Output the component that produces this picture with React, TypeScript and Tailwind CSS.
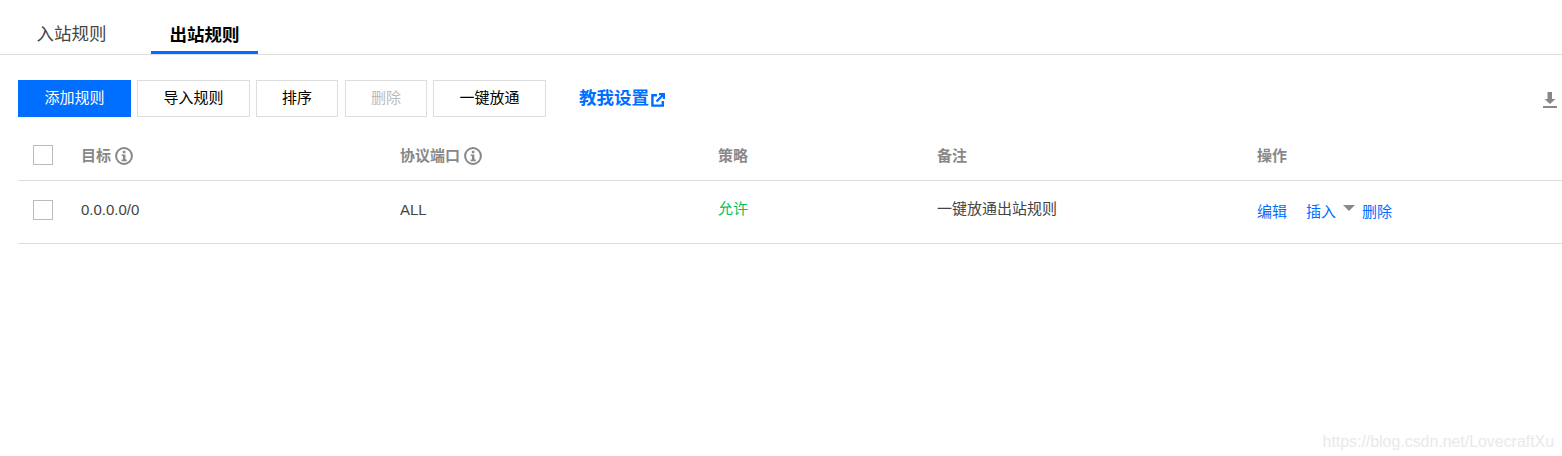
import React from 'react';

const font = { fontFamily: '"Liberation Sans", "Noto Sans CJK SC", sans-serif' };

function InfoIcon() {
    return (
        <svg width="18" height="18" viewBox="0 0 18 18" className="ml-[4px] shrink-0" fill="none">
            <circle cx="9" cy="9" r="7.9" stroke="#888888" strokeWidth="2" />
            <rect x="7.800" y="3.800" width="2.600" height="2.400" fill="#888888" />
            <path d="M6.600 7.400h3.800v5.200h1.400v1.600H6.600v-1.600h1.400V9H6.600z" fill="#888888" />
        </svg>
    );
}

function Checkbox() {
    return <div className="w-5 h-5 border border-[#bbbbbb] bg-white" />;
}

function Btn({ label, w, primary, disabled }: { label: string; w: string; primary?: boolean; disabled?: boolean }) {
    return (
        <button
            className={`${w} h-[37px] text-[15px] flex items-center justify-center ${
                primary
                    ? 'bg-[#006eff] text-white'
                    : disabled
                      ? 'border border-[#dddddd] text-[#bbbbbb] bg-white'
                      : 'border border-[#dddddd] text-black bg-white'
            }`}
        >
            {label}
        </button>
    );
}

export default function App() {
    return (
        <div className="relative w-[1562px] h-[456px] bg-white overflow-hidden" style={font}>
            {/* Tabs */}
            <div className="h-[55px] border-b border-[#dddddd] flex items-end pl-[18px]">
                <div className="w-[107px] h-[39px] flex justify-center pt-[4px] text-[17.5px] leading-[30px] text-[#444444]">入站规则</div>
                <div className="ml-[26px] w-[107px] h-[39px] -mb-px flex justify-center pt-[4px] text-[17.5px] leading-[30px] font-bold text-black">
                    <span>出站规则</span>
                </div>
            </div>
            <div className="flex -mt-[4px] ml-[151px] w-[107px] h-[3px] bg-[#006eff]" />

            {/* Toolbar */}
            <div className="mt-[26px] px-[18px] flex items-center">
                <Btn label="添加规则" w="w-[113px]" primary />
                <div className="ml-[6px]"><Btn label="导入规则" w="w-[113px]" /></div>
                <div className="ml-[6px]"><Btn label="排序" w="w-[82px]" /></div>
                <div className="ml-[7px]"><Btn label="删除" w="w-[82px]" disabled /></div>
                <div className="ml-[6px]"><Btn label="一键放通" w="w-[113px]" /></div>
                <a className="ml-[33px] flex items-center text-[17.5px] font-bold text-[#006eff]">
                    教我设置
                    <svg width="14" height="14" viewBox="0 0 14 14" className="ml-[2px] mt-[2px]" fill="none">
                        <path d="M6 2.200H1.400v10.400h10.400V8" stroke="#006eff" strokeWidth="2.400" />
                        <path d="M5.500 8.500L12 2M8 1h5v5" stroke="#006eff" strokeWidth="2.400" />
                    </svg>
                </a>
                <svg width="16" height="18" viewBox="0 0 16 18" className="ml-auto -mr-[14px] mt-[3px]">
                    <path d="M5.500 1h4.500v7h3.500L8 13 2.500 8h3z" fill="#888888" />
                    <rect x="1" y="15" width="14" height="2" fill="#888888" />
                </svg>
            </div>

            {/* Table */}
            <div className="ml-[18px] grid grid-cols-[63px_319px_318px_219px_320px_1fr]">
                <div className="h-[64px] border-b border-[#dddddd] flex items-center pl-[15px] pt-[13px]"><Checkbox /></div>
                {['目标', '协议端口', '策略', '备注', '操作'].map((h, i) => (
                    <div key={h} className="h-[64px] border-b border-[#dddddd] flex items-center pt-[15px] text-[15px] font-bold text-[#888888]">
                        {h}
                        {i < 2 && <InfoIcon />}
                    </div>
                ))}
                <div className="h-[63px] border-b border-[#dddddd] flex items-center pl-[15px] pb-[4px]"><Checkbox /></div>
                <div className="h-[63px] border-b border-[#dddddd] flex items-center pb-[4px] text-[15px] text-[#444444]">0.0.0.0/0</div>
                <div className="h-[63px] border-b border-[#dddddd] flex items-center pb-[4px] text-[15px] text-[#444444]">ALL</div>
                <div className="h-[63px] border-b border-[#dddddd] flex items-center pb-[6px] text-[15px] text-[#0abf5b]">允许</div>
                <div className="h-[63px] border-b border-[#dddddd] flex items-center pb-[6px] text-[15px] text-[#444444]">一键放通出站规则</div>
                <div className="h-[63px] border-b border-[#dddddd] flex items-center text-[15px] text-[#006eff]">
                    <span>编辑</span>
                    <span className="ml-[19px]">插入</span>
                    <span className="ml-[7px] mb-[8px] w-0 h-0 border-x-[6px] border-x-transparent border-t-[6px] border-t-[#888888]" />
                    <span className="ml-[7px]">删除</span>
                </div>
            </div>

            {/* Watermark */}
            <div className="absolute right-[8px] top-[430px] text-[15.9px] text-[#e9e9e9]">https://blog.csdn.net/LovecraftXu</div>
        </div>
    );
}
